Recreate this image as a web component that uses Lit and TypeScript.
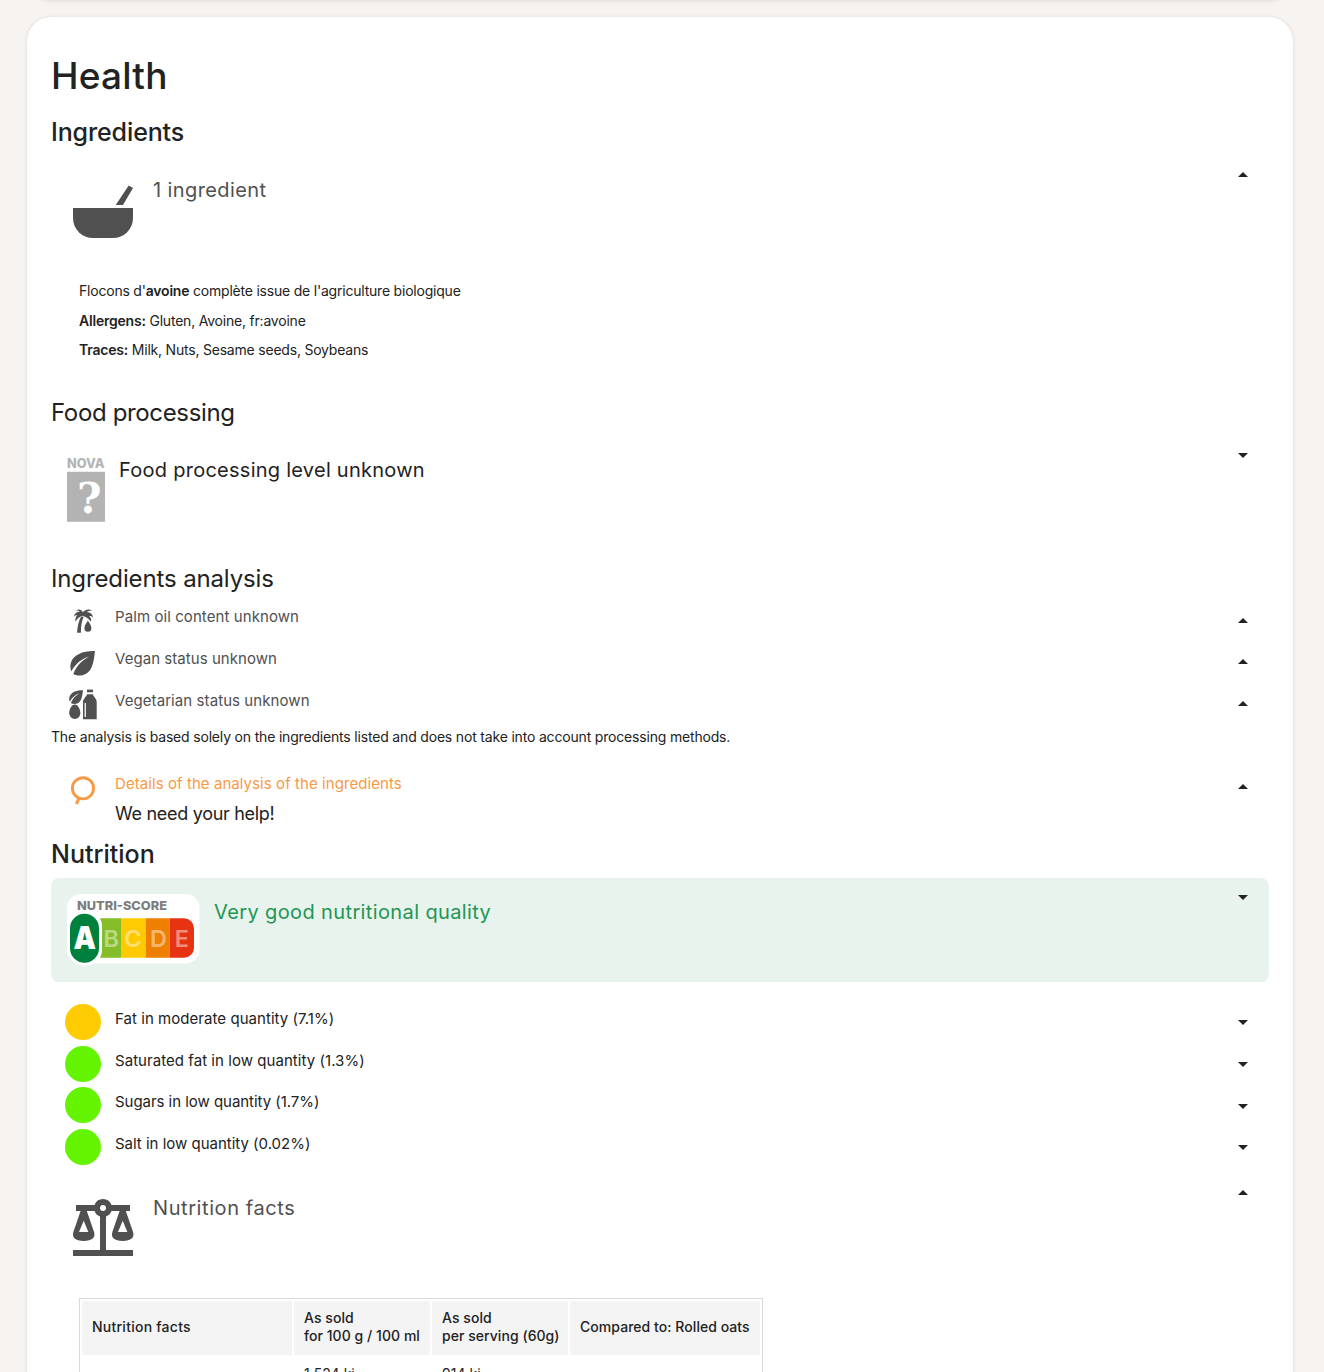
import { LitElement, html, css, svg, nothing, type TemplateResult } from "lit";
import { customElement, property } from "lit/decorators.js";
import { classMap } from "lit/directives/class-map.js";
import { styleMap } from "lit/directives/style-map.js";

/* Drop-down arrow shown at the right end of every panel. */
@customElement("panel-arrow")
class PanelArrow extends LitElement {
  @property({ type: Boolean }) up = false;
  static styles = css`
    :host { display: block; width: 24px; height: 24px; flex: none; }
    svg { display: block; fill: #222; }
  `;
  render() {
    return html`<svg width="24" height="24" viewBox="0 0 24 24">
      <path d=${this.up ? "M7 14l5-5 5 5z" : "M7 10l5 5 5-5z"}></path>
    </svg>`;
  }
}

const bowl = html`<svg width="72" height="72" viewBox="0 0 72 72" fill="#505050">
  <path d="M6 36h60v10a20 20 0 0 1-20 20H26A20 20 0 0 1 6 46z"></path>
  <path d="M61.7 13.6L66 16 56 33h-7.3z"></path>
</svg>`;

const pan = (dx: number) => svg`<path transform="translate(${dx} 0)" fill-rule="evenodd"
  d="M14.3 19h4.8L26.900 41.500c2.200 6-2 9.500-10.200 9.500s-12.400-3.500-10.200-9.500zM16.700 30.700L12 42h9.400z"></path>`;

const scales = html`<svg width="72" height="72" viewBox="0 0 72 72" fill="#505050">
  <path fill-rule="evenodd" d="M9 15h18.500a9 9 0 0 1 17 0H63v6H44.500a9 9 0 0 1-5.500 5.500V60h27v6H6v-6h27V26.500a9 9 0 0 1-5.500-5.500H9zM36 15a3 3 0 1 0 0 6 3 3 0 0 0 0-6z"></path>
  ${pan(0)}${pan(39)}
</svg>`;

const nova = html`<svg class="nova" width="38" height="72" viewBox="0 0 38 72">
  <text class="mark" x="0" y="16" textLength="37.500" lengthAdjust="spacingAndGlyphs" fill="#b4b4b4" font-size="13">NOVA</text>
  <rect y="19.800" width="38" height="50" fill="#b3b3b3"></rect>
  <text class="query" x="22.200" y="60.500" text-anchor="middle" fill="#fff" font-size="42">?</text>
</svg>`;

const nutriscore = html`<svg width="133" height="72" viewBox="0 0 133 72">
  <rect width="132.400" height="69.400" rx="14" fill="#fff"></rect>
  <rect y="16.700" width="35.200" height="55" rx="17.500" fill="#fff"></rect>
  <text class="mark" x="10" y="16" textLength="90" lengthAdjust="spacingAndGlyphs" fill="#7c7c7c" font-size="12">NUTRI-SCORE</text>
  <path fill="#85bd28" d="M33 24.300h21v39.400H33a18 18 0 0 0 2-6V31a18 18 0 0 0-2-6.700z"></path>
  <path fill="#fecb02" d="M54 24.300h24.600v39.400H54z"></path>
  <path fill="#ee7f01" d="M78.600 24.300h24.200v39.400H78.600z"></path>
  <path fill="#e63312" d="M102.800 24.300H117a10 10 0 0 1 10 10v19.400a10 10 0 0 1-10 10h-14.200z"></path>
  <rect x="3" y="19.700" width="29" height="49" rx="14.500" fill="#00803d"></rect>
  <g fill="#fff">
    <text class="grade" x="6.500" y="55.400" font-size="32" textLength="22.500" lengthAdjust="spacingAndGlyphs">A</text>
    <g class="rest" text-anchor="middle" font-size="23.500" fill-opacity=".45">
      <text x="44.300" y="53">B</text><text x="65.900" y="53">C</text>
      <text x="91.400" y="53">D</text><text x="114.800" y="53">E</text>
    </g>
  </g>
</svg>`;

const small = (body: unknown, fill = "#505050") => html`<svg class="glyph" width="36" height="36" viewBox="0 0 36 36" fill=${fill}>${body}</svg>`;

const palm = small(svg`
  <path d="M16.200 14.500l2.500.3c-2 4.600-2.900 9.700-2.800 15.900h-3.800c.3-6.300 1.500-11.700 4.100-16.200z"></path>
  <path d="M18 10.300c-1.300-3-4.500-3.800-7-1.800 1.400-.2 2.800 0 3.800 1-3 .3-5.400 2-6 5.200 1-1 2.300-1.500 3.600-1.400-1.900 1.600-2.500 4-1.800 6.500 1.200-3 3.600-5 6.900-6.100 3.500 1 6.400 2.900 8.500 6 .5-2-.1-4-1.800-5.600 1.500 0 2.900.5 4 1.400-.4-3-2.800-5.200-6.400-5.500 1.600-1.200 3.300-1.400 5.200-1-1.600-1.900-6.700-2.300-9 1.300z"></path>
  <path d="M22.900 18.500c-1.500 2.600-3.500 5-3.500 7.700a3.500 3.500 0 0 0 7 0c0-2.700-2-5.100-3.500-7.700z"></path>`);

const leaf = svg`
  <path d="M30 7C19 6.500 8.500 10.300 6 18.500c-1 3.300-.8 6 .4 8.700C11 19.500 16.500 15 24 12.600 16.500 17 11.500 22 8.300 30c5.700 3 13.200 1.800 17-4.200C28.600 20.500 29 14 30 7z"></path>`;

const vegetarian = small(svg`
  <g transform="translate(1.200 .3) scale(.56)">${leaf}</g>
  <path d="M9.800 18.500c-3.200 0-5.600 5-5.600 8.800a5.600 5.600 0 0 0 11.200 0c0-3.800-2.400-8.800-5.600-8.800z"></path>
  <path d="M22 3.600h6v2.700h-6z"></path>
  <path fill-rule="evenodd" d="M22 8.200h6c.3 2.500 3.700 4.200 3.700 7.800v17.200H18V16c0-3.600 3.700-5.300 4-7.800zM19.600 17v14h1.300V17z"></path>`);

const magnifier = html`<svg class="glyph" width="36" height="36" viewBox="0 0 36 36" fill="none" stroke="#f79a45">
  <circle cx="18" cy="19.300" r="10.600" stroke-width="2.900"></circle>
  <path d="M13.700 29.500l-2.200 5.500" stroke-width="3.200"></path>
</svg>`;

const dot = (fill: string) => small(svg`<circle cx="18" cy="18" r="18"></circle>`, fill);

interface Row { icon: TemplateResult; text: string; tracking: number; up?: boolean; tone?: string; sub?: string; }

const analysis: Row[] = [
  { icon: palm, text: "Palm oil content unknown", tracking: 0.08, up: true, tone: "grey" },
  { icon: small(leaf), text: "Vegan status unknown", tracking: 0.05, up: true, tone: "grey" },
  { icon: vegetarian, text: "Vegetarian status unknown", tracking: 0.08, up: true, tone: "grey" },
];
const details: Row = {
  icon: magnifier, text: "Details of the analysis of the ingredients", tracking: 0.07,
  up: true, tone: "orange", sub: "We need your help!",
};
const levels: Row[] = [
  { icon: dot("#ffcb03"), text: "Fat in moderate quantity (7.1%)", tracking: 0.05 },
  { icon: dot("#64f300"), text: "Saturated fat in low quantity (1.3%)", tracking: 0.05 },
  { icon: dot("#64f300"), text: "Sugars in low quantity (1.7%)", tracking: -0.04 },
  { icon: dot("#64f300"), text: "Salt in low quantity (0.02%)", tracking: -0.01 },
];

@customElement("app-root")
class AppRoot extends LitElement {
  static styles = css`
    :host {
      display: block; box-sizing: border-box; height: 1372px; overflow: hidden;
      padding: 0 31px 0 27px; background: #f6f3f0; color: #222;
      font-family: Inter, "Open Sans", sans-serif; font-size: 14px;
    }
    .card {
      box-sizing: border-box; background: #fff; border-radius: 24px;
      box-shadow: 0 0 1px rgba(0, 0, 0, .14), 0 1px 5px rgba(0, 0, 0, .09);
    }
    .previous { height: 60px; margin-top: -60px; }
    .health { margin-top: 17px; padding: 36px 24px 0; height: 1500px; }
    h1, h2, h3, p { margin: 0; }
    h1 { font-size: 37px; font-weight: 500; line-height: 46px; letter-spacing: .2px; }
    h2, h3 { box-sizing: border-box; height: 30px; padding-top: 1.500px; font-size: 24px; line-height: 29px; }
    h2 { font-size: 25px; font-weight: 500; letter-spacing: 0; }
    h3 { padding-top: .700px; font-weight: 400; }
    .first { margin-top: 18px; padding-top: .500px; letter-spacing: -.12px; }
    .processing { margin-top: 32.800px; letter-spacing: -.35px; }
    .analysis { margin: 23px 0 6.700px; letter-spacing: -.13px; }
    .panel {
      display: flex; gap: 14px; box-sizing: border-box; height: 104px; margin-top: 9px;
      padding: 16px 14px 0 16px; border-radius: 8px;
    }
    .panel svg { display: block; flex: none; }
    .mark { font-family: Inter, sans-serif; font-weight: 800; }
    .query { font-family: "DejaVu Serif", serif; font-weight: 700; }
    .grade { font-family: Inter, sans-serif; font-weight: 900; }
    .rest { font-family: Inter, sans-serif; font-weight: 600; }
    .panel .title { flex: 1; padding-top: 4.700px; font-size: 20px; line-height: 26px; letter-spacing: .4px; }
    .nova + .title { letter-spacing: .26px; }
    .panel panel-arrow { margin-top: -9px; }
    .good { background: #e9f3ed; }
    .good .title { color: #219653; letter-spacing: .38px; }
    .facts .title { padding-top: 5.200px; letter-spacing: .58px; }
    .grey { color: #505050; }
    .orange { color: #f79a45; }
    .ingredients { padding: 16px 28px 0; line-height: 29.500px; letter-spacing: -.21px; }
    .ingredients b { font-weight: 600; }
    .row { display: flex; gap: 14px; box-sizing: border-box; height: 41.700px; padding: 0 14px; }
    .row .glyph { display: block; flex: none; margin-top: 2.200px; overflow: visible; }
    .row .label { flex: 1; padding-top: 7.300px; font-size: 15px; line-height: 20px; }
    .levels .label { padding-top: 7px; }
    .row .sub { padding-top: 8.200px; color: #222; font-size: 18px; line-height: 24px; letter-spacing: -.3px; }
    .row panel-arrow { margin-top: 8.400px; }
    .row panel-arrow[up] { margin-top: 8.800px; }
    .row.tall { height: 72.300px; }
    .note { margin: 2px 0 19.500px; line-height: 20px; letter-spacing: -.18px; }
    .levels { padding: 20px 0 5.200px; }
    .levels + .panel { margin-top: 0; }
    table {
      width: 684px; margin: 20px 28px 0; border: 1px solid #d9d9d9; border-spacing: 2px;
      table-layout: fixed; line-height: 18px; letter-spacing: .05px;
    }
    th, td { padding: 8px 10px 10px; text-align: left; font-weight: 400; }
    th { background: #f4f4f4; font-weight: 500; }
    .name { width: 190px; letter-spacing: .25px; }
    .amount { width: 116px; white-space: nowrap; }
  `;

  private row(r: Row) {
    return html`<div class=${classMap({ row: true, tall: !!r.sub })}>
      ${r.icon}
      <div class="label ${r.tone ?? ""}">
        <div style=${styleMap({ letterSpacing: `${r.tracking}px` })}>${r.text}</div>
        ${r.sub ? html`<div class="sub">${r.sub}</div>` : nothing}
      </div>
      <panel-arrow ?up=${r.up}></panel-arrow>
    </div>`;
  }

  private panel(cls: string, icon: TemplateResult, title: string, up = false, tone = "") {
    return html`<div class="panel ${cls}">
      ${icon}
      <div class="title ${tone}">${title}</div>
      <panel-arrow ?up=${up}></panel-arrow>
    </div>`;
  }

  render() {
    return html`
      <div class="card previous"></div>
      <section class="card health">
        <h1>Health</h1>
        <h2 class="first">Ingredients</h2>
        ${this.panel("", bowl, "1 ingredient", true, "grey")}
        <div class="ingredients">
          <p>Flocons d'<b>avoine</b> complète issue de l'agriculture biologique</p>
          <p><b>Allergens:</b> Gluten, Avoine, fr:avoine</p>
          <p><b>Traces:</b> Milk, Nuts, Sesame seeds, Soybeans</p>
        </div>
        <h3 class="processing">Food processing</h3>
        ${this.panel("", nova, "Food processing level unknown")}
        <h3 class="analysis">Ingredients analysis</h3>
        ${analysis.map((r) => this.row(r))}
        <p class="note">The analysis is based solely on the ingredients listed and does not take into account processing methods.</p>
        ${this.row(details)}
        <h2>Nutrition</h2>
        ${this.panel("good", nutriscore, "Very good nutritional quality")}
        <div class="levels">${levels.map((r) => this.row(r))}</div>
        ${this.panel("facts", scales, "Nutrition facts", true, "grey")}
        <table>
          <thead>
            <tr>
              <th class="name">Nutrition facts</th>
              <th class="amount">As sold<br>for 100 g / 100 ml</th>
              <th class="amount">As sold<br>per serving (60g)</th>
              <th>Compared to: Rolled oats</th>
            </tr>
          </thead>
          <tbody>
            <tr><td></td><td>1,524 kj</td><td>914 kj</td><td></td></tr>
          </tbody>
        </table>
      </section>
    `;
  }
}
